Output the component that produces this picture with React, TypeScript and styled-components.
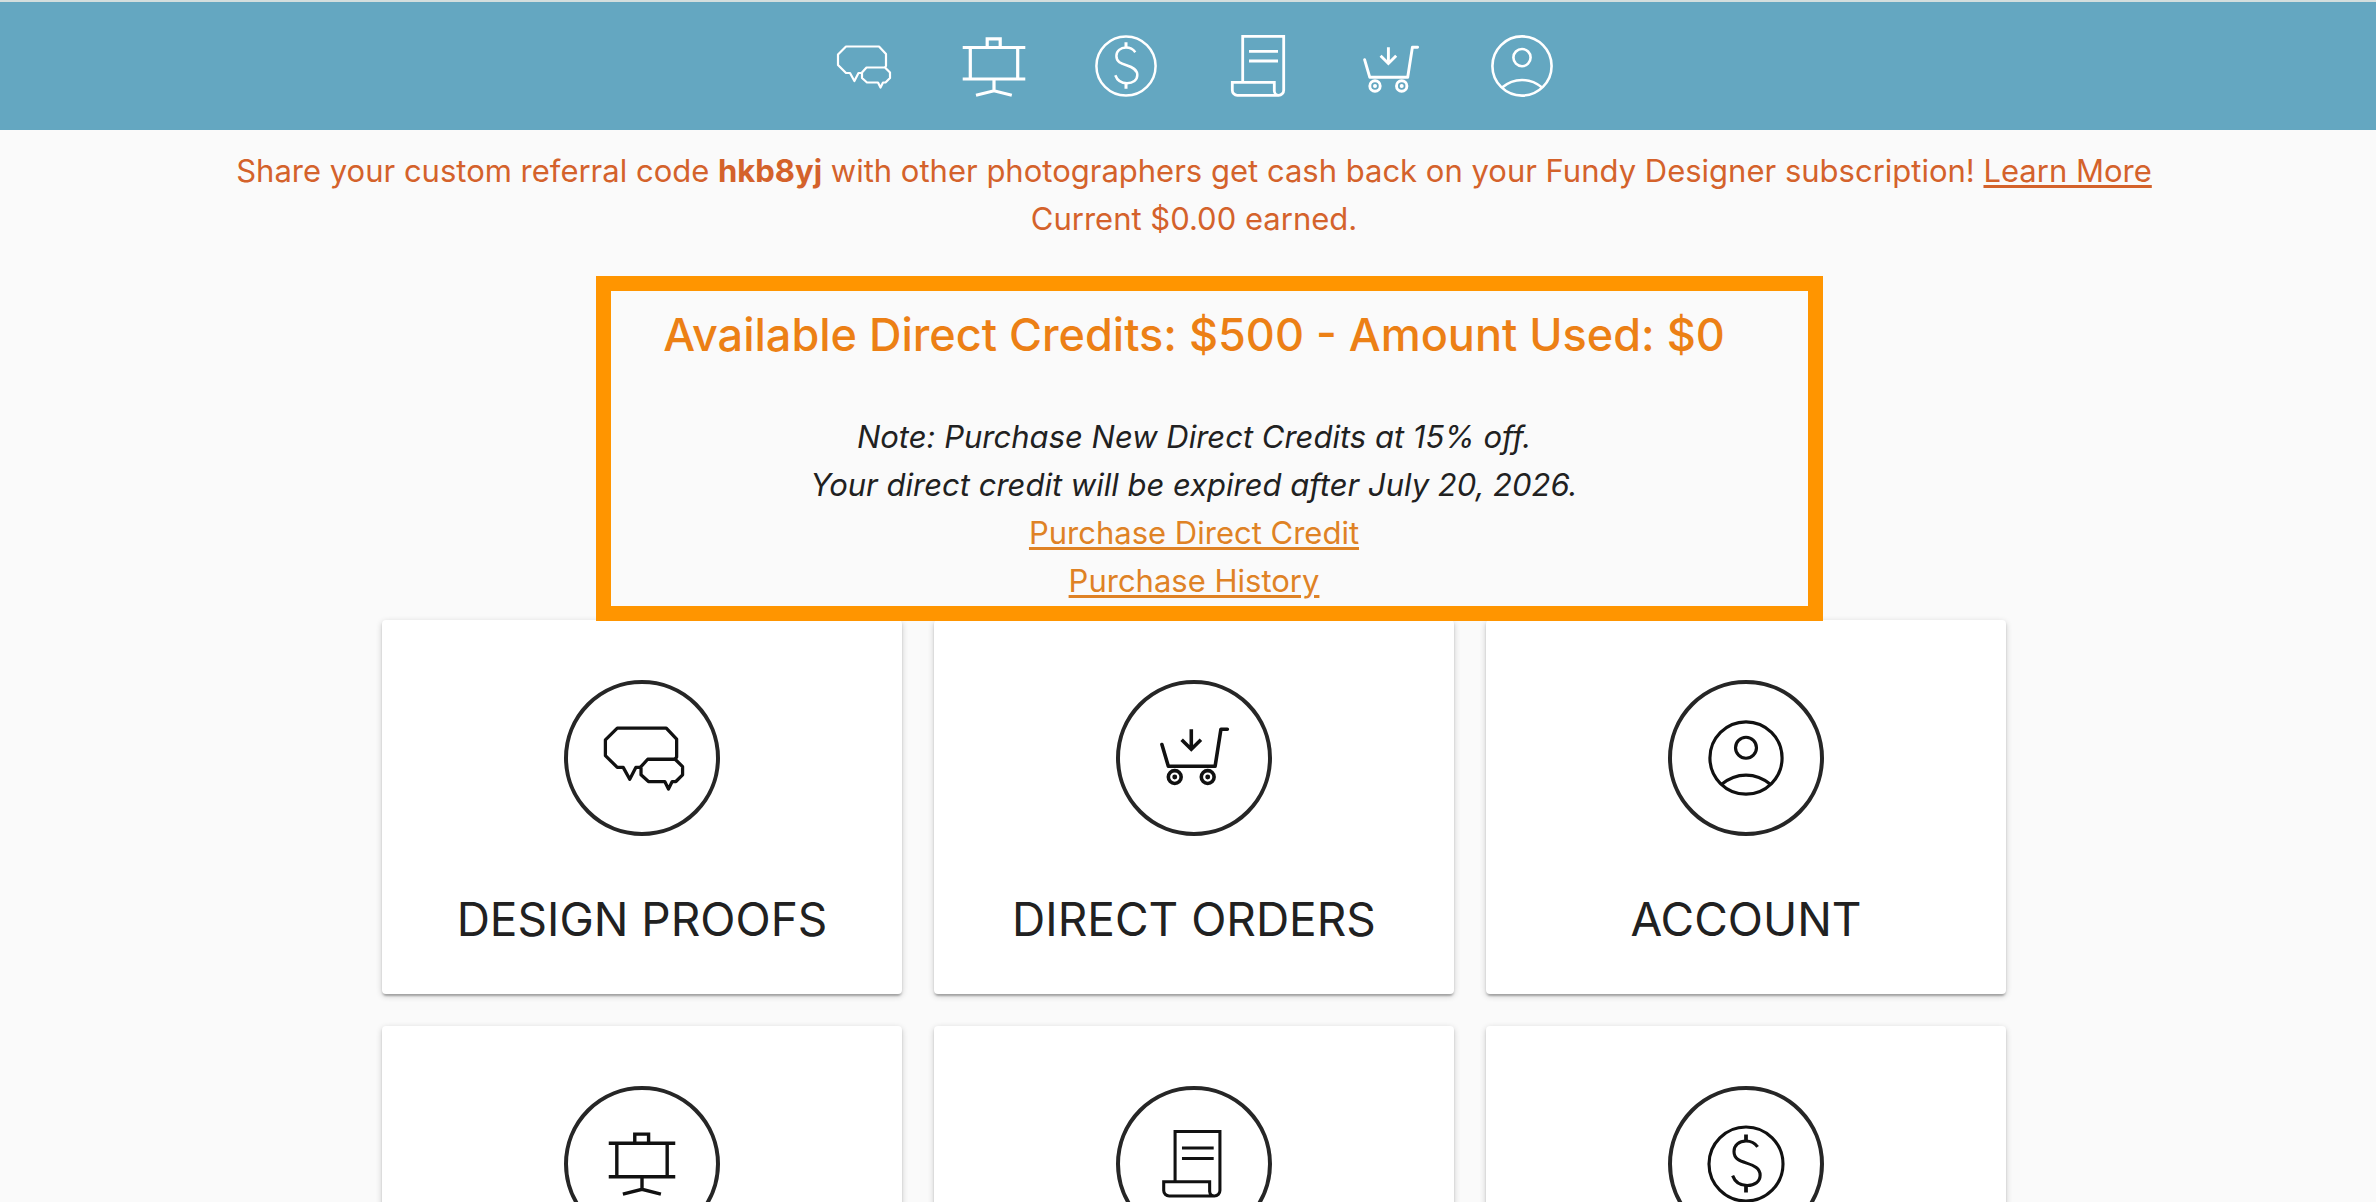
import React from "react";
import styled, { createGlobalStyle } from "styled-components";

const GlobalStyle = createGlobalStyle`
  *, *::before, *::after { box-sizing: border-box; }
  body {
    margin: 0;
    background: #fafafa;
    color: #212121;
    font-family: Inter, "Liberation Sans", sans-serif;
    font-size: 31px;
    line-height: 48px;
  }
`;

type IconName = "chat" | "easel" | "dollar" | "scroll" | "cart" | "person";

const drawings: Record<IconName, React.ReactNode> = {
  chat: (
    <g strokeWidth="2.2" strokeLinejoin="round">
      <path d="M30 39H26.5L22.4 47L18 39H14L6 31V20.5L14 12.5H47L54 20V32L53 33.5" />
      <path d="M34.5 33.5H53L58 38.5V44L53.5 48.5H51L48.5 53.5L46 48.5H35L30 44V38.5Z" />
    </g>
  ),
  easel: (
    <g strokeWidth="3.2">
      <path d="M0.7 13.5H63.3M0.7 45H63.3M8.3 13.5V45M55.7 13.5V45" />
      <path d="M25.2 13.5V4.9H38.2V13.5M32 45V56.8M14 61.3L32 56.8L49.8 61.3" />
    </g>
  ),
  dollar: (
    <g strokeWidth="2.5">
      <circle cx="32" cy="32" r="29.6" />
      <path d="M41.3 18.3C39 15 36 13.6 32 13.6C26.5 13.6 22.4 17 22.4 22C22.4 28 27 29.5 32.5 31.3C38.5 33.3 43.3 35.5 43.3 41C43.3 46 39 49.2 33 49.2C27 49.2 23 46 21.3 41.3" />
      <path d="M32 8.3V13.6M32 49.2V54.7" strokeWidth="3" />
    </g>
  ),
  scroll: (
    <g strokeWidth="2.8">
      <path d="M16.7 48.3V2.3H57.7V56.3a5 5 0 0 1-5 5H11.3a5 5 0 0 1-5-5V48.3H48.3V57a4.5 4.5 0 0 0 4.6 4.3" />
      <path d="M23 17.3H52M23 27H52" />
    </g>
  ),
  cart: (
    <g strokeWidth="2.9">
      <path
        d="M5.6 25.7L10.8 43.3H48.7L53.4 13.3H58.6"
        strokeLinecap="round"
        strokeLinejoin="round"
      />
      <path d="M29.4 13.3V29.5M21.6 21.8L29.4 29.5L37.2 21.8" />
      <circle cx="16" cy="52" r="5.2" />
      <circle cx="42.7" cy="52" r="5.2" />
      <circle cx="16" cy="52" r="1" strokeWidth="2" />
      <circle cx="42.7" cy="52" r="1" strokeWidth="2" />
    </g>
  ),
  person: (
    <g strokeWidth="2.6">
      <circle cx="32" cy="32" r="29.6" />
      <circle cx="32" cy="23.6" r="8.6" />
      <path d="M12 53.6C18 48.5 25 46 32 46C39 46 46 48.5 52 53.6" />
    </g>
  ),
};

function Icon({ name, size, box = "0 0 64 64" }: { name: IconName; size: number; box?: string }) {
  return (
    <svg width={size} height={size} viewBox={box} fill="none" stroke="currentColor" aria-hidden="true">
      {drawings[name]}
    </svg>
  );
}

const Page = styled.div`
  height: 100vh;
  overflow: hidden;
`;

const Header = styled.header`
  border-top: 2px solid #d3dedd;
  background: #64a7c1;
  padding: 32px 0 32px 8px;
`;

const Nav = styled.nav`
  display: flex;
  justify-content: center;
  gap: 68px;
`;

const NavLink = styled.a`
  display: flex;
  color: #fff;
`;

const Content = styled.main`
  padding-left: 12px;
  text-align: center;
`;

const Referral = styled.p`
  margin: 0;
  padding-top: 17px;
  color: #d4622b;
`;

const TextLink = styled.a<{ $tone?: string }>`
  color: ${({ $tone }) => $tone ?? "inherit"};
  text-decoration: underline;
  text-decoration-thickness: 3px;
  text-underline-offset: 3px;
`;

const Credits = styled.section`
  position: relative;
  padding: 64px 0 15px;
`;

/* Frame that lies over the credits and the top edge of the cards */
const Highlight = styled.div`
  position: absolute;
  z-index: 1;
  top: 33px;
  bottom: -1px;
  left: calc(50% - 598px);
  width: 1227px;
  border: 15px solid #ff9500;
  pointer-events: none;
`;

const CreditsTitle = styled.h2`
  margin: 0 0 50px;
  color: #ec8015;
  font-size: 45px;
  font-weight: 500;
  line-height: 56px;
`;

const Note = styled.p`
  margin: 0;
  font-style: italic;
`;

const LinkList = styled.div`
  display: flex;
  flex-direction: column;
  align-items: center;
`;

const Grid = styled.div`
  display: grid;
  grid-template-columns: repeat(3, 1fr);
  gap: 32px;
  max-width: 1624px;
  margin: 0 auto;
`;

const Card = styled.a`
  display: flex;
  flex-direction: column;
  align-items: center;
  gap: 55px;
  min-height: 374px;
  padding: 60px 16px 47px;
  border-radius: 4px;
  background: #fff;
  color: #212121;
  text-decoration: none;
  box-shadow: 0 2px 6px rgba(0, 0, 0, 0.2), 0 2px 2px rgba(0, 0, 0, 0.14),
    0 4px 2px -2px rgba(0, 0, 0, 0.12);
`;

const Ring = styled.span`
  display: flex;
  align-items: center;
  justify-content: center;
  width: 156px;
  height: 156px;
  border: 4px solid #262626;
  border-radius: 50%;
  color: #111;
`;

const CardTitle = styled.span`
  font-size: 46px;
  line-height: 56px;
`;

const navItems: { icon: IconName; label: string; box?: string }[] = [
  { icon: "chat", label: "Design proofs", box: "-2 0 64 64" },
  { icon: "easel", label: "Presentations" },
  { icon: "dollar", label: "Pricing" },
  { icon: "scroll", label: "Invoices" },
  { icon: "cart", label: "Direct orders", box: "-1 0 64 64" },
  { icon: "person", label: "Account" },
];

const cards: { icon: IconName; size: number; label: string; title?: string; box?: string }[] = [
  { icon: "chat", size: 95, label: "Design proofs", title: "DESIGN PROOFS", box: "-1 1 64 64" },
  { icon: "cart", size: 79, label: "Direct orders", title: "DIRECT ORDERS", box: "0 5 64 64" },
  { icon: "person", size: 78, label: "Account", title: "ACCOUNT" },
  { icon: "easel", size: 68, label: "Presentations", box: "0 1 64 64" },
  { icon: "scroll", size: 70, label: "Invoices", box: "2 0 64 64" },
  { icon: "dollar", size: 80, label: "Pricing" },
];

export default function App() {
  return (
    <Page>
      <GlobalStyle />
      <Header>
        <Nav aria-label="Main">
          {navItems.map(({ icon, label, box }) => (
            <NavLink key={icon} href="#" aria-label={label}>
              <Icon name={icon} size={64} box={box} />
            </NavLink>
          ))}
        </Nav>
      </Header>
      <Content>
        <Referral>
          Share your custom referral code <b>hkb8yj</b> with other photographers get cash back on your Fundy
          Designer subscription! <TextLink href="#">Learn More</TextLink>
          <br />
          Current $0.00 earned.
        </Referral>
        <Credits>
          <Highlight />
          <CreditsTitle>Available Direct Credits: $500 - Amount Used: $0</CreditsTitle>
          <Note>Note: Purchase New Direct Credits at 15% off.</Note>
          <Note>Your direct credit will be expired after July 20, 2026.</Note>
          <LinkList>
            <TextLink href="#" $tone="#df8225">Purchase Direct Credit</TextLink>
            <TextLink href="#" $tone="#df8225">Purchase History</TextLink>
          </LinkList>
        </Credits>
        <Grid>
          {cards.map(({ icon, size, label, title, box }) => (
            <Card key={icon} href="#" aria-label={label}>
              <Ring>
                <Icon name={icon} size={size} box={box} />
              </Ring>
              {title && <CardTitle>{title}</CardTitle>}
            </Card>
          ))}
        </Grid>
      </Content>
    </Page>
  );
}
